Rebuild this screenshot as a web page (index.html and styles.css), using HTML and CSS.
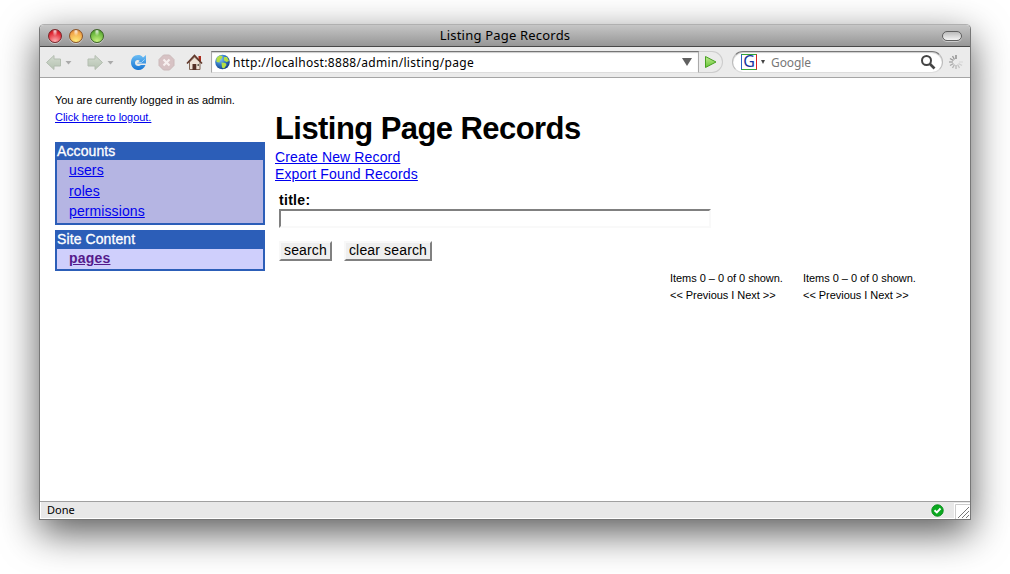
FILE: index.html
```html
<!DOCTYPE html>
<html lang="en">
<head>
<meta charset="utf-8">
<title>Listing Page Records</title>
<link rel="stylesheet" href="styles.css">
</head>
<body>
<div class="window">
  <header class="titlebar">
    <div class="lights"><i class="light red"></i><i class="light amber"></i><i class="light green"></i></div>
    <span class="window-title">Listing Page Records</span>
    <i class="pill"></i>
  </header>
  <nav class="toolbar">
    <svg class="tools" width="171" height="30" viewBox="0 0 171 30">
      <defs>
        <linearGradient id="arrow" x1="0" y1="0" x2="0" y2="1"><stop offset="0" stop-color="#d3dbd0"/><stop offset="1" stop-color="#b5c3b1"/></linearGradient>
        <linearGradient id="blue" x1="0" y1="0" x2="0" y2="1"><stop offset="0" stop-color="#6bbdf4"/><stop offset="1" stop-color="#1674d3"/></linearGradient>
      </defs>
      <path d="M6.500 15.500L14 8.500V12H20.500V19H14V22.500Z" fill="url(#arrow)" stroke="#b3bdb0"/>
      <path d="M25.500 14h6l-3 3.500z" fill="#aaa"/>
      <path d="M62.500 15.500L55 8.500V12H48V19H55V22.500Z" fill="url(#arrow)" stroke="#b3bdb0"/>
      <path d="M67.500 14h6l-3 3.500z" fill="#aaa"/>
      <path d="M106 8V16.500H97L99.800 13.700C97.500 12 95 13.200 95 15.700C95 18.800 98.500 20 101 18H105.500C104 21.800 101 23.300 98 23C93.500 22.600 91 19.500 91 15.500C91 11 94 8 98 8C100 8 101.700 8.600 103 10.500Z" fill="url(#blue)"/>
      <path d="M98 15.500h3.500l3-3" fill="none" stroke="#b4dcfa" stroke-width=".8"/>
      <path d="M123.500 8h6l4.500 4.500v6l-4.500 4.500h-6l-4.500-4.500v-6z" fill="#d7c2c4" stroke="#cbb9ba"/>
      <path d="M123.500 12.500l6 6m0-6l-6 6" stroke="#f7efef" stroke-width="2.200"/>
      <path d="M158.500 9h2.500v5h-2.500z" fill="#a92b1c"/>
      <path d="M149.500 15v7.500h10.500V15l-5.500-5z" fill="#eee3d5" stroke="#806656"/>
      <path d="M147 16.500l7.500-8 7.500 8" fill="none" stroke="#60372a" stroke-width="1.700"/>
      <path d="M152.500 17h3.800v6h-3.800z" fill="#553125"/><path d="M157.500 17h1.500v2h-1.500z" fill="#665"/>
    </svg>
    <div class="address">
      <svg width="16" height="16" viewBox="0 0 16 16"><defs><radialGradient id="globe" cx=".35" cy=".3" r=".75"><stop offset="0" stop-color="#8fc9f2"/><stop offset=".5" stop-color="#347cc8"/><stop offset="1" stop-color="#153c82"/></radialGradient></defs><circle cx="7.500" cy="8" r="7.300" fill="url(#globe)"/><path d="M1.500 4l3-2.500L7.500 2l-.5 2L5 6 4.500 8.500 1.500 8zM9 3l3 0 2 4-2.500 1L9 6.500zM6.500 8.500l4 .5 1 2L9 14.500l-2-1z" fill="#b4de45"/></svg>
      <span class="url">http://localhost:8888/admin/listing/page</span>
      <i class="drop"></i>
    </div>
    <div class="go"><svg width="14" height="14" viewBox="0 0 14 14"><defs><linearGradient id="play" x1="0" y1="0" x2="0" y2="1"><stop offset="0" stop-color="#c0ec90"/><stop offset="1" stop-color="#63c334"/></linearGradient></defs><path d="M2.500 1.500L13 7 2.500 12.500z" fill="url(#play)" stroke="#48a022"/></svg></div>
    <div class="find">
      <span class="g">G</span><i class="tiny"></i><span class="hint">Google</span>
      <svg width="16" height="16" viewBox="0 0 16 16"><circle cx="6.500" cy="6.500" r="4.500" fill="none" stroke="#444" stroke-width="2"/><path d="M10 10l4.500 4.500" stroke="#444" stroke-width="2.700"/></svg>
    </div>
    <svg class="spinner" width="16" height="16" viewBox="0 0 16 16" stroke-width="1.400"><path d="M8 1v4" stroke="#888"/><path d="M4.500 2l2 3.500" stroke="#999"/><path d="M2 4.500L5.500 6.500" stroke="#999"/><path d="M1 8h4" stroke="#aaa"/><path d="M2 11.500l3.500-2" stroke="#aaa"/><path d="M4.500 14l2-3.500" stroke="#b5b5b5"/><path d="M8 15v-4" stroke="#bbb"/><path d="M11.500 14l-2-3.500" stroke="#c5c5c5"/><path d="M14 11.500l-3.500-2" stroke="#d0d0d0"/><path d="M15 8h-4" stroke="#ddd"/></svg>
  </nav>
  <main class="page">
    <aside class="sidebar">
      <p class="login">You are currently logged in as admin.<br><a href="#">Click here to logout.</a></p>
      <section class="menu accounts"><h2>Accounts</h2><a href="#">users</a><a href="#">roles</a><a href="#">permissions</a></section>
      <section class="menu site"><h2>Site Content</h2><a class="current" href="#">pages</a></section>
    </aside>
    <div class="content">
      <h1>Listing Page Records</h1>
      <div class="actions"><a href="#">Create New Record</a><a href="#">Export Found Records</a></div>
      <form class="search">
        <label for="title">title:</label>
        <input id="title" type="text">
        <div class="buttons"><button type="button" class="b-search">search</button><button type="button" class="b-clear">clear search</button></div>
      </form>
      <div class="pagers">
        <p>Items 0 – 0 of 0 shown.<br>&lt;&lt; Previous I Next &gt;&gt;</p>
        <p>Items 0 – 0 of 0 shown.<br>&lt;&lt; Previous I Next &gt;&gt;</p>
      </div>
    </div>
  </main>
  <footer class="status">
    <span class="done">Done</span>
    <svg class="ok" width="13" height="13" viewBox="0 0 13 13"><circle cx="6.500" cy="6.500" r="5.700" fill="#0baa20" stroke="#078c18"/><path d="M3.500 6.300l2.300 2.200 3.700-4" fill="none" stroke="#fff" stroke-width="1.900"/></svg>
    <svg class="grip" width="16" height="16" viewBox="0 0 16 16"><path d="M0 0h16v16H0z" fill="#fff"/><path d="M1.500 16V1.500H16" fill="none" stroke="#ccc"/><path d="M4 15L15 4M8 15L15 8M12 15L15 12" stroke="#777"/></svg>
  </footer>
</div>
</body>
</html>
```

FILE: styles.css
```css
* { box-sizing: border-box; }
body { margin: 0; height: 574px; padding: 24px 39px 0; overflow: hidden; background: #fff; font-family: "Liberation Sans", Arial, sans-serif; color: #000; }
.window { width: 932px; height: 496px; display: flex; flex-direction: column; border: 1px solid #777; border-top-color: #b0b0b0; border-radius: 5px 5px 0 0; background: #fff; box-shadow: 0 13px 38px rgba(0,0,0,.65); white-space: nowrap; }
.titlebar { height: 22px; flex: none; display: grid; grid-template-columns: 80px 1fr 80px; align-items: center; background: linear-gradient(#c6c6c6, #969696); border-bottom: 1px solid #484848; border-radius: 4px 4px 0 0; }
.lights { display: flex; gap: 7px; padding-left: 8px; }
.light { width: 14px; height: 14px; border-radius: 50%; border: 1px solid #555; box-shadow: 0 1px 0 rgba(255,255,255,.45); }
.red { background: radial-gradient(ellipse at 50% 10%, rgba(255,255,255,.85), transparent 32%), radial-gradient(circle at 50% 95%, #ffb0b3, #e02531 70%, #a0141e); border-color: #7b2529; }
.amber { background: radial-gradient(ellipse at 50% 10%, rgba(255,255,255,.85), transparent 32%), radial-gradient(circle at 50% 95%, #ffef7d, #f2a549 70%, #b96520); border-color: #8b5426; }
.green { background: radial-gradient(ellipse at 50% 10%, rgba(255,255,255,.85), transparent 32%), radial-gradient(circle at 50% 95%, #c9f581, #68b53c 70%, #34701a); border-color: #3c6325; }
.window-title { justify-self: center; margin-top: -2px; font: 13px/20px "Noto Sans", sans-serif; letter-spacing: .2px; }
.pill { justify-self: end; margin-right: 8px; width: 20px; height: 10px; border: 1px solid #606060; border-radius: 5px; background: linear-gradient(#bbb, #f4f4f4); box-shadow: 0 1px 0 #ccc; }
.toolbar { height: 31px; flex: none; display: flex; align-items: center; background: #ebebeb; border-bottom: 1px solid #a5a5a5; }
.address { width: 488px; height: 22px; display: flex; align-items: center; padding: 0 6px 0 3px; background: #fff; border: 1px solid #aaa; border-top: 1px solid #757575; border-bottom-color: #ddd; box-shadow: inset 0 1px 1px #ccc; }
.url { margin: 1px 0 0 2px; font: 12px/20px "Noto Sans", sans-serif; letter-spacing: .31px; }
.drop { margin-left: auto; border: 5px solid transparent; border-top: 8px solid #606060; border-bottom: 0; }
.go { width: 24px; height: 22px; display: flex; align-items: center; justify-content: center; padding-right: 1px; border: 1px solid #ccc; border-left: 0; border-radius: 0 11px 11px 0; }
.find { width: 211px; height: 22px; margin-left: 9px; display: flex; align-items: center; padding: 0 6px 0 8px; border: 1px solid #bbb; border-top-color: #777; border-bottom-color: #ddd; border-radius: 11px; background: #fff; box-shadow: inset 0 1px 1px #ccc; }
.g { width: 16px; height: 16px; border: 1px solid #35a635; border-left-color: #2b61c5; border-right-color: #d92121; text-align: center; color: #15349e; font: 16px/13px "Noto Sans", sans-serif; }
.tiny { margin-left: 4px; border: 2.5px solid transparent; border-top: 4px solid #444; border-bottom: 0; }
.hint { margin: 1px 0 0 6px; font: 12px/20px "Noto Sans", sans-serif; letter-spacing: -.1px; color: #777; }
.find svg { margin-left: auto; }
.spinner { margin-left: 5px; fill: none; }
.page { flex: 1; min-height: 0; display: flex; gap: 10px; padding: 14px 0 0 15px; }
a { color: #0000ee; }
.sidebar { width: 210px; }
.login { margin: 0 0 16px; font-size: 11px; line-height: 17px; letter-spacing: -.04px; }
.menu { border: 2px solid #2c5eb8; background: #b5b5e3; margin-bottom: 5px; font-size: 14px; letter-spacing: .1px; }
.menu h2 { margin: 0; height: 17px; background: #2c5eb8; color: #fff; font-size: 14px; font-weight: normal; line-height: 15px; -webkit-text-stroke: .3px #fff; }
.menu a { display: block; width: max-content; margin-left: 12px; height: 20.500px; line-height: 19px; }
.accounts { height: 83px; }
.accounts h2 { height: 16px; margin-bottom: 1px; }
.site { height: 41px; background: #cfcffc; }
.menu .current { color: #551a8b; font-weight: bold; letter-spacing: .2px; }
.content { flex: 1; padding-top: 18px; }
h1 { margin: 0; font-size: 31px; line-height: 37px; height: 39px; letter-spacing: -.57px; }
.actions { display: flex; flex-direction: column; align-items: flex-start; font-size: 14px; line-height: 17px; letter-spacing: .14px; }
.search { margin: 9px 0 0 4px; display: flex; flex-direction: column; font-size: 14px; }
.search label { font-weight: bold; line-height: 17px; letter-spacing: .3px; }
.search input { width: 432px; height: 19px; margin-top: 0; padding: 0; border: 2px solid #808080; border-right-color: #f9f9f9; border-bottom-color: #f9f9f9; background: #fff; }
.buttons { display: flex; gap: 12px; margin-top: 13px; }
button { height: 20px; padding: 0 0 2px; border: 2px solid #f8f8f8; border-right-color: #808080; border-bottom-color: #808080; background: #efefef; color: #000; font: 14px/14px "Liberation Sans", Arial, sans-serif; letter-spacing: .15px; }
.b-search { width: 53px; }
.b-clear { width: 88px; }
.pagers { display: flex; margin: 9px 0 0 395px; }
.pagers p { width: 133px; margin: 0; font-size: 11px; line-height: 17px; letter-spacing: -.04px; }
.status { height: 18px; flex: none; display: flex; align-items: center; padding-left: 7px; background: #e8e8e8; border-top: 1px solid #a0a0a0; box-shadow: inset 0 -1px #fff, inset 1px 0 #fff; }
.done { margin-top: -2px; font: 11px/16px "Noto Sans", sans-serif; }
.ok { margin-left: auto; margin-right: 10px; }
```
